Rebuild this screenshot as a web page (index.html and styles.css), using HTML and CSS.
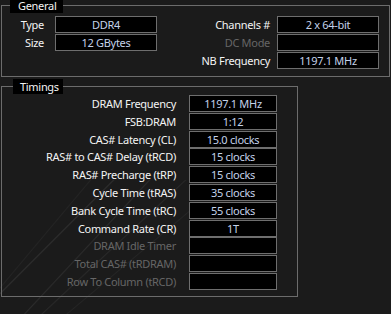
FILE: index.html
```html
<!DOCTYPE html>
<html>
<head>
<meta charset="utf-8">
<link rel="stylesheet" href="styles.css">
</head>
<body>
<div class="page">
  <fieldset class="group general">
    <legend class="legend">General</legend>
    <div class="gen-grid">
      <span class="lbl">Type</span><span class="field">DDR4</span>
      <span class="lbl">Channels #</span><span class="field">2 x 64-bit</span>
      <span class="lbl">Size</span><span class="field">12 GBytes</span>
      <span class="lbl off">DC Mode</span><span class="field"></span>
      <span></span><span></span>
      <span class="lbl">NB Frequency</span><span class="field">1197.1 MHz</span>
    </div>
  </fieldset>
  <fieldset class="group timings">
    <legend class="legend">Timings</legend>
    <div class="tim-grid">
      <span class="lbl">DRAM Frequency</span><span class="field">1197.1 MHz</span>
      <span class="lbl">FSB:DRAM</span><span class="field">1:12</span>
      <span class="lbl">CAS# Latency (CL)</span><span class="field">15.0 clocks</span>
      <span class="lbl">RAS# to CAS# Delay (tRCD)</span><span class="field">15 clocks</span>
      <span class="lbl">RAS# Precharge (tRP)</span><span class="field">15 clocks</span>
      <span class="lbl">Cycle Time (tRAS)</span><span class="field">35 clocks</span>
      <span class="lbl">Bank Cycle Time (tRC)</span><span class="field">55 clocks</span>
      <span class="lbl">Command Rate (CR)</span><span class="field">1T</span>
      <span class="lbl off">DRAM Idle Timer</span><span class="field"></span>
      <span class="lbl off">Total CAS# (tRDRAM)</span><span class="field"></span>
      <span class="lbl off">Row To Column (tRCD)</span><span class="field"></span>
    </div>
  </fieldset>
</div>
</body>
</html>
```
FILE: styles.css
```css
html, body {
  margin: 0;
  padding: 0;
  background: #1b1b1b;
}
body {
  width: 391px;
  height: 314px;
  overflow: hidden;
  font-family: "Noto Sans", "DejaVu Sans", sans-serif;
  font-size: 11px;
  letter-spacing: -0.3px;
  color: #f2f2f2;
  background-color: #1b1b1b;
  background-image:
    linear-gradient(135deg, transparent 33.6%, rgba(255,255,255,0.09) 34%, transparent 34.5%),
    linear-gradient(133deg, transparent 45.6%, rgba(255,255,255,0.07) 46%, transparent 46.5%),
    linear-gradient(137deg, transparent 53.6%, rgba(255,255,255,0.06) 54%, transparent 54.5%),
    linear-gradient(140deg, transparent 62.6%, rgba(255,255,255,0.045) 63%, transparent 63.4%),
    linear-gradient(130deg, transparent 28.6%, rgba(255,255,255,0.04) 29%, transparent 29.4%);
  background-repeat: no-repeat;
  background-size: 200px 134px;
  background-position: 0 180px;
}
.page {
  margin-top: -2px;
}
.group {
  margin: 0 0 0 1px;
  border: 1px solid #6c6c6c;
  padding: 0;
  box-sizing: border-box;
  min-width: 0;
}
.legend {
  box-sizing: border-box;
  background: #000;
  color: #f4f4f4;
  height: 15px;
  line-height: 15px;
  font-size: 11px;
  padding: 0;
}
.general {
  width: 389px;
  padding: 3px 0 7px 0;
}
.general .legend {
  margin-left: 8px;
  width: 53px;
  padding-left: 8px;
}
.timings {
  width: 297px;
  margin-top: 2px;
  padding: 1px 0 6px 0;
}
.timings .legend {
  margin-left: 11px;
  width: 50px;
  padding-left: 7px;
}
.gen-grid {
  display: grid;
  grid-template-columns: 42px 113px 120px 102px;
  grid-auto-rows: 17px;
  row-gap: 1px;
}
.gen-grid > :nth-child(2),
.gen-grid > :nth-child(6) {
  margin-left: 11px;
}
.gen-grid > :nth-child(3),
.gen-grid > :nth-child(7),
.gen-grid > :nth-child(11) {
  margin-right: 7px;
}
.tim-grid {
  display: grid;
  grid-template-columns: 174px 88px;
  column-gap: 13px;
  grid-auto-rows: 17px;
  row-gap: 0.8px;
}
.lbl {
  text-align: right;
  line-height: 17px;
  white-space: nowrap;
  color: #f4f4f4;
}
.lbl.off {
  color: #666;
}
.field {
  box-sizing: border-box;
  height: 17px;
  background: #000;
  border: 1px solid #6e6e6e;
  color: #c4d2ea;
  text-align: center;
  line-height: 15px;
  white-space: nowrap;
}
```
